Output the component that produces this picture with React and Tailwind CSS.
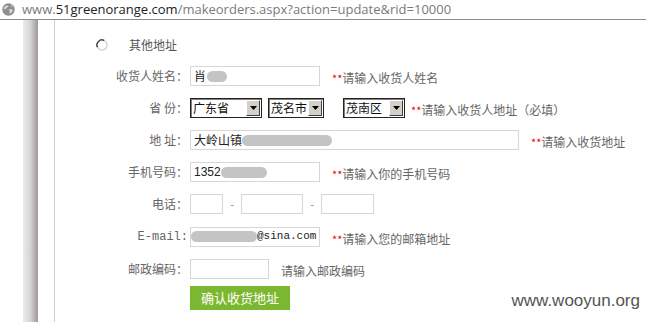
import React from 'react';

const cjk = "font-['SimSun','Noto_Sans_CJK_SC',sans-serif]";

function Globe() {
  return (
    <svg width="13" height="13" viewBox="0 0 13 13" className="shrink-0">
      <circle cx="6.5" cy="6.5" r="6.2" fill="#8f8f8f" />
      <path d="M3 3.2 C4.5 2.2 6 2.4 6.4 3.6 C6 4.8 4.6 4.4 4.2 5.6 C3.8 6.8 2.4 6.4 1.8 5.4 C2 4.4 2.4 3.8 3 3.2 Z" fill="#d6d6d6" />
      <path d="M7.4 6 C8.8 5.6 10.6 6.2 10.8 7.6 C10.4 9.2 9 10.4 7.8 10.6 C7.2 9.4 7.8 8.6 7.2 7.6 Z" fill="#d6d6d6" />
      <path d="M8.4 1.8 C9.6 2 10.6 2.8 11 3.8 C10 4 9 3.4 8.4 1.8 Z" fill="#d6d6d6" />
    </svg>
  );
}

function Radio() {
  return (
    <svg width="12" height="12" viewBox="0 0 12 12">
      <circle cx="6" cy="6" r="5.5" fill="#fff" />
      <path d="M1.6 8.4 A5 5 0 0 1 8.4 1.6" stroke="#444" strokeWidth="1.5" fill="none" />
      <path d="M8.4 1.6 A5 5 0 0 1 8.4 10.4 A5 5 0 0 1 1.6 8.4" stroke="#d0d0d0" strokeWidth="1.2" fill="none" />
    </svg>
  );
}

function Note({ children, star = true }) {
  return (
    <span className="text-[12px] text-[#666] whitespace-nowrap">
      {star && <span className="text-[#e00] text-[11px]">**</span>}
      {children}
    </span>
  );
}

function Input({ w, children }) {
  return (
    <div className={`h-[20px] border border-[#d6d6d6] bg-white flex items-center px-[3px] overflow-hidden whitespace-nowrap text-[12px] text-[#222] ${w}`}>
      {children}
    </div>
  );
}

function Blob({ w }) {
  return <span className={`inline-block shrink-0 h-[11px] rounded-full bg-[#c4c4c4] blur-[0.6px] ${w}`} />;
}

function Select({ w, label }) {
  return (
    <div className={`h-[20px] flex items-stretch border border-[#222] shadow-[inset_1px_1px_0_#808080] bg-white overflow-hidden ${w}`}>
      <span className="flex-1 pl-[2px] text-[12px] leading-[18px] text-[#111] whitespace-nowrap">{label}</span>
      <span className="w-[14px] shrink-0 my-[1px] mr-[1px] bg-[#d4d0c8] border border-t-white border-l-white border-r-[#404040] border-b-[#404040] flex items-center justify-center">
        <svg width="7" height="4" viewBox="0 0 7 4"><path d="M0 0h7L3.5 4z" fill="#000" /></svg>
      </span>
    </div>
  );
}

function Row({ label, mono, children, h = 'h-[32px]' }) {
  return (
    <div className={`flex items-center ${h}`}>
      <div className={`w-[135px] shrink-0 text-right pr-[2px] text-[12px] text-[#666] ${mono ? "font-['Liberation_Mono',monospace] text-[11px]" : ''}`}>
        {label}
      </div>
      <div className="flex items-center">{children}</div>
    </div>
  );
}

export default function App() {
  return (
    <div className={`w-[646px] h-[322px] bg-white overflow-hidden relative ${cjk}`}>
      <div className="h-[20px] flex items-center gap-[7px] pl-[2px] border-b border-[#8c8c8c] font-['Open_Sans',sans-serif] text-[13px] text-[#7a7a7a]">
        <Globe />
        <span>
          www.<span className="text-[#222]">51greenorange.com</span>/makeorders.aspx?action=update&amp;rid=10000
        </span>
      </div>
      <div className="flex h-[302px]">
        <div className="w-[23px] shrink-0" />
        <div className="w-[15px] shrink-0 bg-gradient-to-r from-[#ececec] via-[#d6d2d2] to-[#9e9898]" />
        <div className="w-[16px] shrink-0" />
        <div className="border-l border-[#cfcfcf] flex-1 flex flex-col pt-[9px]">
          <div className="flex items-center h-[31px]">
            <div className="w-[41px]" />
            <Radio />
            <span className="ml-[21px] text-[12px] text-[#555]">其他地址</span>
          </div>
          <Row label="收货人姓名：">
            <Input w="w-[130px]">肖<Blob w="w-[20px] ml-[1px]" /></Input>
            <span className="ml-[12px]"><Note>请输入收货人姓名</Note></span>
          </Row>
          <Row label="省 份：">
            <Select w="w-[72px]" label="广东省" />
            <div className="w-[6px]" />
            <Select w="w-[56px]" label="茂名市" />
            <div className="w-[19px]" />
            <Select w="w-[62px]" label="茂南区" />
            <span className="ml-[6px]"><Note>请输入收货人地址（必填）</Note></span>
          </Row>
          <Row label="地 址：">
            <Input w="w-[329px]">大岭山镇<Blob w="w-[90px]" /></Input>
            <span className="ml-[12px]"><Note>请输入收货地址</Note></span>
          </Row>
          <Row label="手机号码：">
            <Input w="w-[130px]"><span className="font-['Liberation_Sans',sans-serif]">1352</span><Blob w="w-[46px]" /></Input>
            <span className="ml-[12px]"><Note>请输入你的手机号码</Note></span>
          </Row>
          <Row label="电话：">
            <Input w="w-[33px]" />
            <span className="w-[18px] text-center text-[#999] text-[12px]">-</span>
            <Input w="w-[62px]" />
            <span className="w-[18px] text-center text-[#999] text-[12px]">-</span>
            <Input w="w-[53px]" />
          </Row>
          <Row label="E-mail:" mono h="h-[33px]">
            <Input w="w-[130px]">
              <Blob w="w-[66px] -ml-[3px]" />
              <span className="font-['Liberation_Mono',monospace] text-[11px] text-[#222]">@sina.com</span>
            </Input>
            <span className="ml-[12px]"><Note>请输入您的邮箱地址</Note></span>
          </Row>
          <Row label="邮政编码：">
            <Input w="w-[79px]" />
            <span className="ml-[12px]"><Note star={false}>请输入邮政编码</Note></span>
          </Row>
          <div className="flex h-[26px] items-center">
            <div className="w-[135px]" />
            <button className="w-[100px] h-[24px] bg-[#7cb82f] text-white text-[13px]">确认收货地址</button>
          </div>
        </div>
      </div>
      <div className="absolute right-[6px] bottom-[9px] font-['Liberation_Sans',sans-serif] text-[17px] text-[#555]">www.wooyun.org</div>
    </div>
  );
}
